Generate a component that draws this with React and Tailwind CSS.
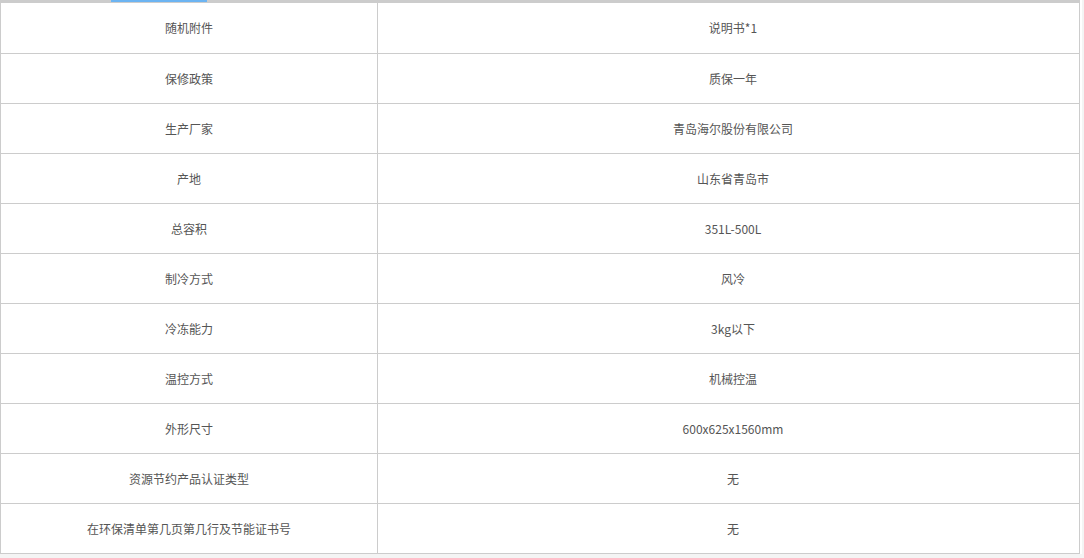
import React from 'react';

const ROWS = [
  ['随机附件', '说明书*1'],
  ['保修政策', '质保一年'],
  ['生产厂家', '青岛海尔股份有限公司'],
  ['产地', '山东省青岛市'],
  ['总容积', '351L-500L'],
  ['制冷方式', '风冷'],
  ['冷冻能力', '3kg以下'],
  ['温控方式', '机械控温'],
  ['外形尺寸', '600x625x1560mm'],
  ['资源节约产品认证类型', '无'],
  ['在环保清单第几页第几行及节能证书号', '无'],
];

const App = () => {
  return (
    <div
      className="w-[1084px] h-[558px] bg-[#f4f4f4] overflow-hidden"
      style={{ fontFamily: '"Noto Sans CJK SC", "Noto Sans", sans-serif' }}
    >
      <div className="w-[1082px] h-[554px] bg-white">
        {/* tab bar underline */}
        <div className="relative h-[3px] w-[1080px] bg-[#cccccc]">
          <div className="absolute left-[111px] top-0 h-[2px] w-[96px] bg-[#6cb4f2]" />
        </div>

        <table className="w-[1080px] border-collapse table-fixed text-[12px] text-[#555555]">
          <colgroup>
            <col className="w-[377px]" />
            <col />
          </colgroup>
          <tbody>
            {ROWS.map(([label, value], i) => (
              <tr key={i} className="h-[50px]">
                <td className="border border-[#cccccc] border-t-0 text-center align-middle p-0 leading-[49px]">
                  {label}
                </td>
                <td className="border border-[#cccccc] border-t-0 text-center align-middle p-0 pl-[9px] leading-[49px]">
                  {value}
                </td>
              </tr>
            ))}
          </tbody>
        </table>
      </div>
    </div>
  );
};

export default App;
